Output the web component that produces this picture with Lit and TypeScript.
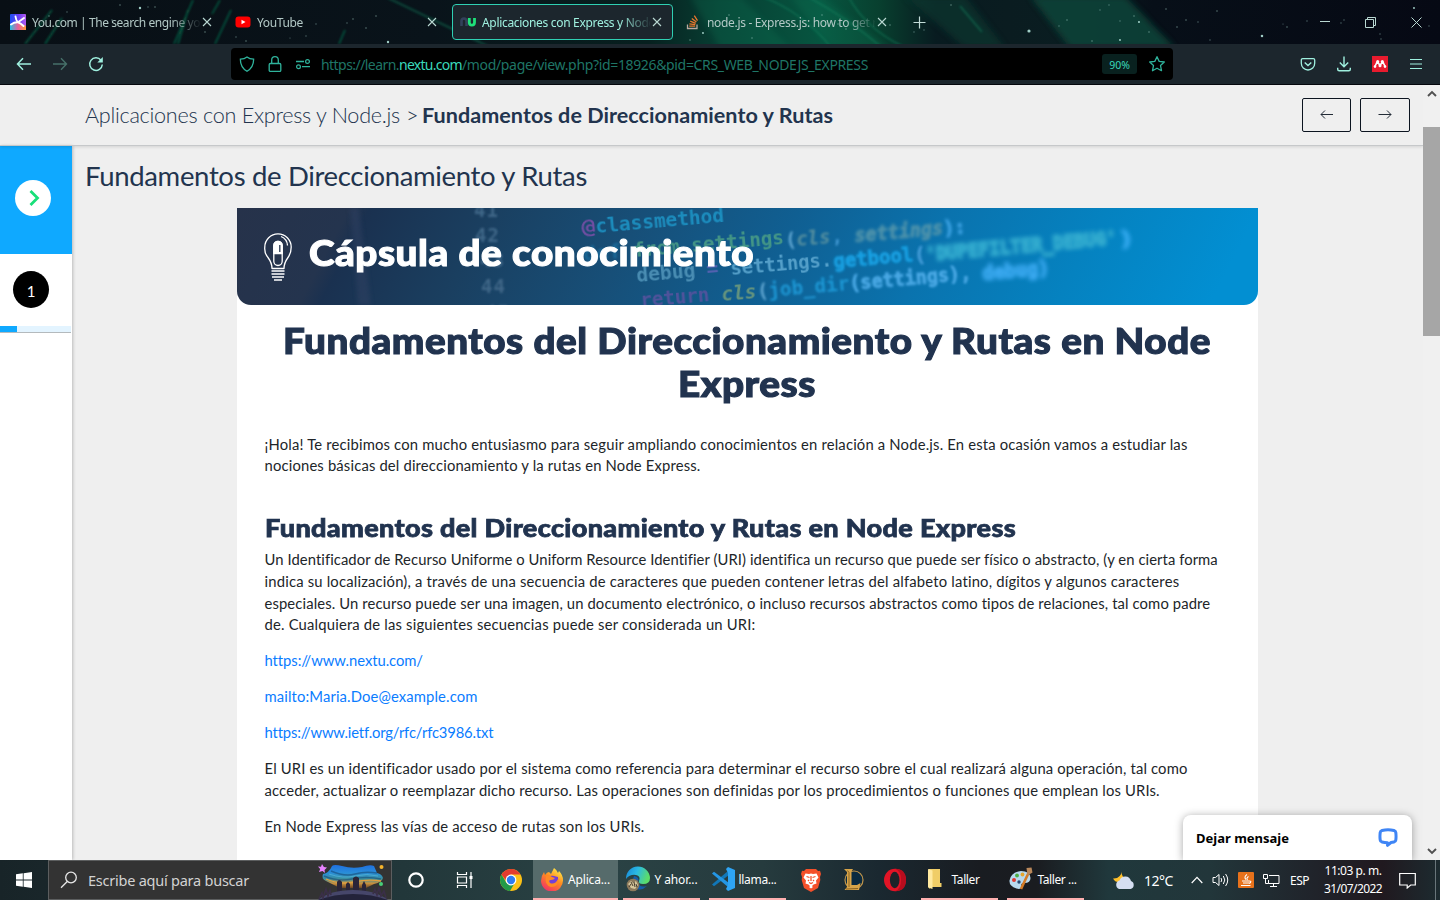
import { LitElement, html, svg, css } from "lit";
import { customElement, property } from "lit/decorators.js";
import { classMap } from "lit/directives/class-map.js";

/** One line of text that fills the given width, by tracking or (with stretch) by widening its glyphs. */
@customElement("fit-text")
class FitText extends LitElement {
  @property({ type: Number }) w = 0;
  @property({ type: Boolean }) stretch = false;
  static styles = css`
    :host { display: inline-block; white-space: pre; flex: none; text-align: left; }
    .t { display: inline-block; transform-origin: 0 50%; }
  `;
  render() {
    return html`<span class="t"><slot></slot></span>`;
  }
  firstUpdated() {
    const el = this.renderRoot.querySelector(".t") as HTMLElement;
    const n = (this.textContent || "").length;
    if (!this.w || !n) return;
    const natural = el.getBoundingClientRect().width;
    if (this.stretch) {
      el.style.transform = `scaleX(${this.w / natural})`;
      this.style.width = `${this.w}px`;
    } else {
      el.style.letterSpacing = `${(this.w - natural) / n}px`;
    }
  }
}

const ft = (text: string, w: number) => html`<fit-text .w=${w}>${text}</fit-text>`;
const wide = (text: string, w: number) => html`<fit-text .w=${w} .stretch=${true}>${text}</fit-text>`;

const icon = (w: number, h: number, body: unknown) =>
  html`<svg class="ic" width=${w} height=${h} viewBox="0 0 ${w} ${h}" fill="none">${body}</svg>`;

const closeX = icon(10, 10, svg`<path d="M1 1l8 8M9 1l-8 8" stroke="#b9d8d2" stroke-width="1.1"/>`);

const youIcon = html`<svg class="ic" width="16" height="16" viewBox="0 0 16 16">
  <defs><linearGradient id="yg" x1="0" y1="0" x2="1" y2="0"><stop offset="0" stop-color="#1d4ff0"/><stop offset=".55" stop-color="#6a3df5"/><stop offset="1" stop-color="#b65cf0"/></linearGradient>
  <linearGradient id="yh" x1="0" y1="0" x2="1" y2="0"><stop offset="0" stop-color="#24c3e8"/><stop offset=".5" stop-color="#e85f9c"/><stop offset="1" stop-color="#ff9a3c"/></linearGradient></defs>
  <rect width="16" height="16" rx="1" fill="url(#yg)"/><path d="M0 11L8 8l8 4v4H0z" fill="url(#yh)"/>
  <path d="M5.500 2.500Q6 6.500 8 8.300M8 8.300Q4.500 8 1 10.500M8 8.300Q10.500 9 13.500 12M8 8.300L14 4" stroke="#fff" stroke-width="1.900" fill="none" stroke-linecap="round"/></svg>`;
const ytIcon = icon(16, 16, svg`<rect x=".5" y="2.500" width="15" height="11" rx="3" fill="#f00"/><path d="M6.500 5.700v4.600l4-2.300z" fill="#fff"/>`);
const nuIcon = icon(16, 16, svg`<path d="M1.500 12V7a2.500 2.500 0 015 0v5" stroke="#33415a" stroke-width="2.600"/><path d="M9.300 4v4.500a2.600 2.600 0 005.200 0V4" stroke="#1fe07a" stroke-width="2.800"/>`);
const soIcon = icon(16, 16, svg`<path d="M2.500 10.500v4h9.500v-4" stroke="#b9a9a0" stroke-width="1.300"/><path d="M4.200 12.200h6M4.400 9.800l5.900.9M5.200 7.200l5.500 2.200M6.800 4.400l4.600 3.600M9.300 1.700l3.200 5" stroke="#e8772e" stroke-width="1.300"/>`);

const stars: [number, number, number][] = [
  [120, 5, 1], [140, 8, 1.5], [148, 7, .8], [155, 7, 1], [49, 16, 1], [67, 12, .8], [112, 20, .8], [205, 32, 1], [246, 41, 1],
  [316, 24, .8], [347, 23, .8], [353, 19, 1], [366, 28, 1], [376, 16, 1], [388, 42, 1.5], [290, 38, .7], [306, 36, .8], [236, 37, .8],
  [729, 15, 1], [703, 33, 1.200], [690, 40, 1], [752, 38, 1], [822, 15, 1], [838, 24, 1], [846, 29, 1], [890, 25, 1], [914, 32, .8], [924, 30, .8],
  [951, 5, 1], [1029, 31, 2], [1067, 20, 1], [1059, 26, .8], [1100, 10, .8], [1109, 5, .8], [1092, 41, 1], [1120, 21, .8], [1134, 16, 1],
  [1139, 22, 1.300], [1149, 32, 1], [1120, 40, 1.200], [1166, 9, 1], [1186, 20, 1], [1177, 27, 1], [1198, 22, .8], [1210, 40, .8],
  [1217, 11, 1], [1262, 36, 1.600], [1287, 27, 1], [1283, 24, .7], [1307, 21, .8], [1341, 23, .8], [1380, 34, .8], [1414, 8, 1.200], [1429, 26, .8], [1344, 20, .8], [1381, 39, .8],
];

const tabArt = html`<svg class="art" width="1440" height="44" viewBox="0 0 1440 44" preserveAspectRatio="none">
  <defs>
    <linearGradient id="sky" x1="0" x2="1" y1="0" y2="0">
      <stop offset="0" stop-color="#080f15"/><stop offset=".3" stop-color="#09131a"/><stop offset=".45" stop-color="#07201f"/>
      <stop offset=".5" stop-color="#073f33"/><stop offset=".57" stop-color="#075540"/><stop offset=".61" stop-color="#08402f"/>
      <stop offset=".65" stop-color="#081b20"/><stop offset=".7" stop-color="#0a1c20"/><stop offset=".75" stop-color="#0a1d21"/><stop offset=".8" stop-color="#070f18"/><stop offset="1" stop-color="#060914"/>
    </linearGradient>
    <filter id="soft"><feGaussianBlur stdDeviation="3"/></filter><filter id="soft1"><feGaussianBlur stdDeviation="1"/></filter>
  </defs>
  <rect width="1440" height="44" fill="url(#sky)"/>
  <path d="M1030 -4h95l50 52h-105z" fill="#0f4337" filter="url(#soft)" opacity=".9"/>
  <path d="M690 -4h50l50 52h-70zM790 -4h30l70 52h-60z" fill="#0a7a59" filter="url(#soft)" opacity=".25"/>
  <path d="M905 -4h60l40 52h-40z" fill="#0a3a30" filter="url(#soft)" opacity=".6"/>
  <path d="M193 0L174 44M188 10L178 44M220 0l-8 14M231 10l-16 34M52 10L25 44M62 18L45 44M345 30l-6 14" stroke="#0a5d44" stroke-width="1.500" filter="url(#soft1)"/>
  <path d="M388 -2L500 52M440 23L480 42M960 6l22 26M848 -4Q865 28 902 46M760 -4Q800 10 830 46M810 -2Q850 20 880 46" stroke="#11805d" stroke-width="2" fill="none" filter="url(#soft1)" opacity=".45"/>
  ${stars.map(([x, y, r]) => svg`<circle cx=${x} cy=${y} r=${r * .8} fill="#a9d8d0" opacity=${r > 1 ? .95 : .5}/>`)}
</svg>`;

const T = "#9ff0df";
const G = "#2fb39c";
const toolbarIcons = {
  back: icon(16, 16, svg`<path d="M15 8H1.500M7 2.300L1.500 8 7 13.700" stroke=${T} stroke-width="1.500"/>`),
  fwd: icon(16, 16, svg`<path d="M1 8h13.500M9 2.300L14.500 8 9 13.700" stroke="#467069" stroke-width="1.400"/>`),
  reload: icon(16, 16, svg`<path d="M14.300 8.500A6.300 6.300 0 1113 4.200" stroke=${T} stroke-width="1.500"/><path d="M14.800 1v5.500H9.300z" fill=${T}/>`),
  shield: icon(16, 16, svg`<path d="M8 1Q10.500 3 14.600 3.200Q14.800 11 8 15.300Q1.200 11 1.400 3.200Q5.500 3 8 1z" stroke=${G} stroke-width="1.300"/>`),
  lock: icon(16, 16, svg`<rect x="2.200" y="7.500" width="11.600" height="8" rx="1.200" stroke=${G} stroke-width="1.300"/><path d="M4.700 7.500V4a3.300 3.300 0 016.600 0v3.500" stroke=${G} stroke-width="1.300"/>`),
  perm: icon(16, 16, svg`<circle cx="12.500" cy="5.500" r="1.900" stroke=${G} stroke-width="1.200"/><circle cx="3.500" cy="10.700" r="1.900" stroke=${G} stroke-width="1.200"/><path d="M1 5.500h8M7 10.700h8" stroke=${G} stroke-width="1.300"/>`),
  star: icon(18, 18, svg`<path d="M9 1.700l2.200 4.700 5.100.6-3.800 3.500 1 5.200L9 13.200l-4.500 2.500 1-5.200L1.700 7l5.100-.6z" stroke=${G} stroke-width="1.300" stroke-linejoin="round"/>`),
  pocket: icon(16, 16, svg`<path d="M2.700 2.600h10.600q1.400 0 1.400 1.400v3.300a6.700 6.700 0 01-13.400 0V4q0-1.400 1.400-1.400z" stroke=${T} stroke-width="1.300"/><path d="M4.700 6.500L8 9.600l3.300-3.100" stroke=${T} stroke-width="1.400"/>`),
  download: icon(16, 16, svg`<path d="M8 .5v10M3.800 6.500L8 10.700l4.200-4.200M1.700 11.700v1.500q0 1.500 1.500 1.500h9.600q1.500 0 1.500-1.500v-1.500" stroke=${T} stroke-width="1.400"/>`),
  mend: icon(16, 16, svg`<rect width="16" height="16" fill="#e81b2e"/><path d="M3 10.200Q4 8.500 5 6M8 9.500L5.700 6M8 9.500L10.300 6M13 10.200Q12 8.500 11 6" stroke="#fff" stroke-width="1.600"/><circle cx="3" cy="10.600" r="1.300" fill="#fff"/><circle cx="13" cy="10.600" r="1.300" fill="#fff"/><circle cx="8" cy="9.800" r="1.500" fill="#fff"/><circle cx="5.700" cy="5.400" r="1.500" fill="#fff"/><circle cx="10.300" cy="5.400" r="1.500" fill="#fff"/>`),
  menu: icon(14, 12, svg`<path d="M1 1.500h12M1 6h12M1 10.500h12" stroke=${T} stroke-width="1.200"/>`),
};

@customElement("browser-chrome")
class BrowserChrome extends LitElement {
  static styles = css`
    :host { display: block; height: 85px; background: #05070d; font-family: "Noto Sans", sans-serif; }
    .ic { display: block; flex: none; }
    .strip { position: relative; height: 44px; overflow: hidden; }
    .art { position: absolute; inset: 0; display: block; }
    .tabs { position: relative; display: flex; gap: 5px; padding: 4px 0 0 2px; align-items: flex-start; }
    .tab { box-sizing: border-box; width: 220px; height: 36px; border: 1px solid transparent; border-radius: 4px; display: flex; align-items: center; padding-left: 7px; color: #b3c9c6; font-size: 12px; }
    .active { width: 221px; margin-right: -1px; background: #1c262d; border-color: #2fd0b3; color: #9ff0df; }
    .title { width: 168px; margin: 0 2px 0 6px; padding-top: 2px; overflow: hidden; line-height: 18px; -webkit-mask-image: linear-gradient(to right, #000 138px, transparent 170px); }
    .plus { display: flex; height: 36px; align-items: center; padding-left: 11px; }
    .win { display: flex; margin-left: auto; gap: 35px; height: 36px; align-items: center; padding-right: 18px; }
    .bar { height: 40px; background: #1c262d; display: flex; align-items: center; padding: 0 17px 0 16px; box-sizing: border-box; }
    .nav { display: flex; gap: 20px; width: 215px; }
    .url { width: 942px; height: 32px; box-sizing: border-box; background: #000; border-radius: 4px; display: flex; align-items: center; padding: 0 7px 0 8px; color: #1f7566; font-size: 14px; }
    .url .ic { margin-right: 12px; }
    .addr { display: flex; margin-left: -2px; line-height: 20px; padding-top: 1px; }
    .host { color: #3ad8bb; }
    .zoom { margin-left: auto; width: 35px; height: 20px; background: #09211f; border-radius: 3px; color: #3ad8bb; font-size: 10.500px; line-height: 22px; text-align: center; margin-right: 11px; }
    .url .star .ic { margin: 0; }
    .right { display: flex; gap: 20px; margin-left: auto; align-items: center; }
    .right span { margin-left: 1px; }
  `;
  tabs = [
    { i: youIcon, t: "You.com | The search engine yo", w: 168 },
    { i: ytIcon, t: "YouTube", w: 46 },
    { i: nuIcon, t: "Aplicaciones con Express y Node", w: 173, a: true },
    { i: soIcon, t: "node.js - Express.js: how to get r", w: 170 },
  ];
  render() {
    const b = toolbarIcons;
    return html`
      <div class="strip">${tabArt}
        <div class="tabs">
          ${this.tabs.map((t) => html`<div class=${classMap({ tab: true, active: !!t.a })}>${t.i}<div class="title">${ft(t.t, t.w)}</div>${closeX}</div>`)}
          <div class="plus">${icon(13, 13, svg`<path d="M6.500 .5v12M.5 6.500h12" stroke="#c2dcd8" stroke-width="1.200"/>`)}</div>
          <div class="win">
            ${icon(10, 10, svg`<path d="M0 4.500h10" stroke="#b9d8d2"/>`)}
            ${icon(11, 11, svg`<path d="M2.500 2.500v-2h8v8h-2M.5 2.500h8v8h-8z" stroke="#b9d8d2"/>`)}
            ${icon(11, 11, svg`<path d="M.5 .5l10 10M10.500 .5l-10 10" stroke="#b9d8d2"/>`)}
          </div>
        </div>
      </div>
      <div class="bar">
        <div class="nav">${b.back}${b.fwd}${b.reload}</div>
        <div class="url">${b.shield}${b.lock}${b.perm}
          <div class="addr">${ft("https://learn.", 78)}<span class="host">${ft("nextu.com", 63)}</span>${ft("/mod/page/view.php?id=18926&pid=CRS_WEB_NODEJS_EXPRESS", 406)}</div>
          <div class="zoom">90%</div><span class="star">${b.star}</span>
        </div>
        <div class="right">${b.pocket}${b.download}${b.mend}<span>${b.menu}</span></div>
      </div>`;
  }
}

interface Seg { t: string; x: number; y: number; w: number; c: string; b: number; i?: boolean; o?: number; }
const code: Seg[] = [
  { t: "@", x: 582, y: 234, w: 14, c: "#7a4fa8", b: .6 },
  { t: "classmethod", x: 596, y: 233, w: 129, c: "#1f93c4", b: .5 },
  { t: "def", x: 584, y: 261, w: 38, c: "#1f7fb4", b: .9, o: .6 },
  { t: "from_settings", x: 634, y: 257, w: 151, c: "#4a9c86", b: .6 },
  { t: "(", x: 786, y: 247, w: 11, c: "#6fb3dd", b: .8 },
  { t: "cls", x: 797, y: 246, w: 34, c: "#5e95a0", b: .8, i: true },
  { t: ",", x: 832, y: 243, w: 11, c: "#4aa0dc", b: .9 },
  { t: "settings", x: 855, y: 242, w: 89, c: "#4f93ab", b: 1.4, i: true, o: 1 },
  { t: "):", x: 944, y: 235, w: 22, c: "#3fa5e6", b: 1.4, o: 1 },
  { t: "debug", x: 637, y: 282, w: 59, c: "#4f93b8", b: .5 },
  { t: "=", x: 707, y: 276, w: 12, c: "#5a62b4", b: .6 },
  { t: "settings.", x: 731, y: 275, w: 102, c: "#5ba6cf", b: .7 },
  { t: "getbool", x: 834, y: 268, w: 80, c: "#16a0e2", b: 1.2, o: 1 },
  { t: "(", x: 915, y: 262, w: 11, c: "#4aa0dc", b: 1.2 },
  { t: "'DUPEFILTER_DEBUG'", x: 926, y: 261, w: 192, c: "#34add0", b: 1.9, o: 1 },
  { t: ")", x: 1120, y: 246, w: 14, c: "#34aaf0", b: 1.9, o: 1 },
  { t: "return", x: 641, y: 307, w: 69, c: "#57529e", b: .6 },
  { t: "cls", x: 722, y: 301, w: 35, c: "#6e9a7c", b: .6, i: true },
  { t: "(", x: 758, y: 298, w: 11, c: "#6fb3dd", b: .8 },
  { t: "job_dir", x: 769, y: 297, w: 81, c: "#1f97d4", b: .9, o: 1 },
  { t: "(settings),", x: 850, y: 290, w: 122, c: "#4aa8e4", b: 1.2, o: 1 },
  { t: "debug)", x: 983, y: 280, w: 67, c: "#3aa9f0", b: 1.9, o: 1 },
];
const nums = [["41", 474, 217], ["42", 475, 242], ["43", 480, 267], ["44", 481, 293], ["45", 485, 319]] as const;

const bannerArt = html`<svg class="art" width="1021" height="97" viewBox="237 208 1021 97">
  <defs><linearGradient id="bg" x1="0" x2="1" y1="0" y2="0.050">
    <stop offset="0" stop-color="#26324a"/><stop offset=".11" stop-color="#24344e"/><stop offset=".13" stop-color="#1a3150"/>
    <stop offset=".25" stop-color="#1a3f60"/><stop offset=".4" stop-color="#174f78"/><stop offset=".55" stop-color="#105f92"/>
    <stop offset=".7" stop-color="#0a73ae"/><stop offset=".85" stop-color="#0582c0"/><stop offset="1" stop-color="#028fd2"/></linearGradient>
    ${[5, 6, 7, 8, 9, 12, 14, 19, 20].map((n) => svg`<filter id=${"b" + n} x="-20%" y="-30%" width="140%" height="160%"><feGaussianBlur stdDeviation=${n / 10}/></filter>`)}
  </defs>
  <rect x="237" y="208" width="1021" height="97" fill="url(#bg)"/>
  <path d="M350 208h9l12 97h-13z" fill="#304363" opacity=".5" filter="url(#b20)"/>
  ${nums.map(([t, x, y]) => svg`<text class="code" x=${x} y=${y} textLength="24" fill="#3f6687" filter="url(#b12)">${t}</text>`)}
  ${code.map((s) => svg`<text class=${(s.i ? "code it" : "code") + (s.b > 1.5 ? " farther" : s.b > 1 ? " far" : "")} transform="translate(${s.x} ${s.y}) rotate(-5)" textLength=${s.w} lengthAdjust="spacingAndGlyphs" fill=${s.c} stroke=${s.c} opacity=${s.o ?? .9} filter="url(#b${Math.round(s.b * 10)})">${s.t}</text>`)}
</svg>`;

const bulb = icon(30, 50, svg`<g stroke="#fff" stroke-width="1.300" stroke-linejoin="round"><path d="M9 36.500Q9 31 5 25.500A14 14 0 0 1 1.800 15a13.200 13.200 0 0 1 26.400 0q0 6-3.200 10.500Q21 31 21 36.500z"/><path d="M18 4.500q6 2.200 6.500 9" stroke-width="1.300"/><rect x="10.800" y="9.500" width="8.400" height="24" rx="4.200"/><path d="M10.800 21.500h8.400V13.500a4.200 4.200 0 00-8.400 0z" fill="#fff"/><path d="M16.800 13v7" stroke="#24344e"/><path d="M8.500 39h13M8.500 42h13M9 45h12M11 48h8" stroke-width="1.500"/></g>`);

type Line = [string, number];
const intro: Line[] = [
  ["¡Hola! Te recibimos con mucho entusiasmo para seguir ampliando conocimientos en relación a Node.js. En esta ocasión vamos a estudiar las", 923],
  ["nociones básicas del direccionamiento y la rutas en Node Express.", 436],
];
const uri: Line[] = [
  ["Un Identificador de Recurso Uniforme o Uniform Resource Identifier (URI) identifica un recurso que puede ser físico o abstracto, (y en cierta forma", 953],
  ["indica su localización), a través de una secuencia de caracteres que pueden contener letras del alfabeto latino, dígitos y algunos caracteres", 915],
  ["especiales. Un recurso puede ser una imagen, un documento electrónico, o incluso recursos abstractos como tipos de relaciones, tal como padre", 946],
  ["de. Cualquiera de las siguientes secuencias puede ser considerada un URI:", 491],
];
const links: Line[] = [["https://www.nextu.com/", 158], ["mailto:Maria.Doe@example.com", 213], ["https://www.ietf.org/rfc/rfc3986.txt", 228]];
const usage: Line[] = [
  ["El URI es un identificador usado por el sistema como referencia para determinar el recurso sobre el cual realizará alguna operación, tal como", 923],
  ["acceder, actualizar o reemplazar dicho recurso. Las operaciones son definidas por los procedimientos o funciones que emplean los URIs.", 895],
];
const closing: Line[] = [["En Node Express las vías de acceso de rutas son los URIs.", 380]];

@customElement("course-page")
class CoursePage extends LitElement {
  static styles = css`
    :host { display: grid; grid-template-columns: 1423px 17px; height: 775px; overflow: hidden; position: relative; background: #efefef; font-family: Lato, sans-serif; }
    .ic { display: block; flex: none; }
    .view { display: grid; grid-template-rows: 61px 1fr; overflow: hidden; }
    .head { box-sizing: border-box; display: flex; align-items: center; padding: 0 13px 0 85px; color: #22344e; font-size: 21.600px; border-bottom: 1px solid #c6c8ca; box-shadow: 0 1px 3px rgba(0,0,0,.12); z-index: 1; }
    .crumb { font-weight: 300; display: flex; gap: 6px; }
    .crumb b { font-weight: 700; }
    .btns { margin-left: auto; display: flex; gap: 9px; }
    .btn { box-sizing: border-box; width: 49px; height: 34px; border: 1px solid #0c1420; border-radius: 2px; display: grid; place-items: center; }
    .btn + .btn { width: 50px; }
    .body { display: grid; grid-template-columns: 72px 1fr; min-height: 0; }
    .side { background: #fff; box-shadow: 1px 0 3px rgba(0,0,0,.22); }
    .toggle { height: 108px; background: #0fa9ff; display: flex; align-items: center; padding-left: 15px; box-sizing: border-box; padding-bottom: 4px; }
    .circle { width: 36px; height: 36px; border-radius: 50%; background: #fff; display: grid; place-items: center; padding-left: 2px; box-sizing: border-box; }
    .step { height: 72px; display: flex; align-items: center; padding: 0 0 1px 13px; box-sizing: border-box; }
    .num { background: #000; color: #fff; font-size: 15px; line-height: 41px; height: 37px; display: block; text-align: center; padding: 0; }
    .prog { width: 71px; height: 6px; background: #e3f4ff; border-bottom: 1px solid #b4babd; }
    .fill { width: 17px; height: 6px; background: #0fa9ff; }
    .main { padding-left: 13px; overflow: hidden; }
    .title { margin: 0; font-weight: 400; font-size: 27.500px; line-height: 34px; height: 62px; padding-top: 13px; box-sizing: border-box; color: #22344e; }
    .card { margin-left: 152px; width: 1021px; height: 700px; background: #fff; }
    .banner { position: relative; height: 97px; border-radius: 0 0 14px 14px; overflow: hidden; display: flex; padding: 24px 0 0 26px; box-sizing: border-box; }
    .art { position: absolute; left: 0; top: 0; }
    .code { font-family: "DejaVu Sans Mono", monospace; font-size: 19px; font-weight: 700; stroke-width: 0; }
    .far { stroke-width: .8px; }
    .farther { stroke-width: 1.800px; }
    .it { font-style: italic; }
    .bannertitle { position: relative; color: #fff; font-weight: 900; font-size: 36px; line-height: 43px; letter-spacing: .5px; margin-left: 16px; margin-top: -1px; -webkit-text-stroke: 1.100px #fff; }
    .bulb { position: relative; }
    .content { padding: 13.300px 28px 0 27.500px; color: #212529; font-size: 14.800px; line-height: 21.600px; }
    .ln { display: block; height: 21.600px; }
    h1 { margin: 0 0 29px; color: #21334f; font-weight: 900; font-size: 36px; line-height: 43.200px; text-align: center; letter-spacing: .5px; -webkit-text-stroke: 1.100px #21334f; position: relative; top: .7px; }
    h1 span { display: block; height: 43.200px; }
    h2 { margin: 35.500px 0 8px; color: #21334f; font-weight: 900; font-size: 24.500px; line-height: 29px; letter-spacing: .3px; -webkit-text-stroke: .750px #21334f; position: relative; top: .6px; }
    p { margin: 0 0 14.400px; }
    .link { color: #0a7cff; }
    .scroll { display: flex; flex-direction: column; background: #f0f0f0; align-items: center; }
    .arrow { height: 17px; display: grid; place-items: center; }
    .thumb { width: 17px; height: 209px; margin-top: 25px; background: #a6a6a6; }
    .down { margin-top: auto; }
    .chat { position: absolute; left: 1183px; bottom: 0; width: 229px; height: 45px; box-sizing: border-box; background: #fff; border-radius: 8px 8px 0 0; box-shadow: 0 1px 8px rgba(0,0,0,.35); display: flex; justify-content: space-between; align-items: center; padding: 1px 14px 0 13px; font: 700 13px "Noto Sans", sans-serif; color: #000; z-index: 2; }
  `;
  para(lines: Line[], cls = "") {
    return html`<p class=${cls}>${lines.map(([t, w]) => html`<span class="ln">${ft(t, w)}</span>`)}</p>`;
  }
  render() {
    return html`
      <div class="view">
        <div class="head">
          <div class="crumb">${ft("Aplicaciones con Express y Node.js", 315)}<span>${ft(">", 10)}</span><b>${ft("Fundamentos de Direccionamiento y Rutas", 411)}</b></div>
          <div class="btns">
            <div class="btn">${icon(14, 10, svg`<path d="M13 4.500H1M5 .5l-4 4 4 4" stroke="#222b36"/>`)}</div>
            <div class="btn">${icon(14, 10, svg`<path d="M.5 4.500H13M9 .5l4 4-4 4" stroke="#222b36"/>`)}</div>
          </div>
        </div>
        <div class="body">
          <div class="side">
            <div class="toggle"><div class="circle">${icon(12, 18, svg`<path d="M2.500 2l7 7-7 7" stroke="#19df78" stroke-width="2.800"/>`)}</div></div>
            <div class="step"><div class="circle num">1</div></div>
            <div class="prog"><div class="fill"></div></div>
          </div>
          <div class="main">
            <div class="title">${ft("Fundamentos de Direccionamiento y Rutas", 502)}</div>
            <div class="card">
              <div class="banner">${bannerArt}<div class="bulb">${bulb}</div><div class="bannertitle">${wide("Cápsula de conocimiento", 445)}</div></div>
              <div class="content">
                <h1><span>${wide("Fundamentos del Direccionamiento y Rutas en Node", 928)}</span><span>${wide("Express", 138)}</span></h1>
                ${this.para(intro)}
                <h2>${wide("Fundamentos del Direccionamiento y Rutas en Node Express", 751)}</h2>
                ${this.para(uri)}
                ${links.map((l) => this.para([l], "link"))}
                ${this.para(usage)}
                ${this.para(closing)}
              </div>
            </div>
          </div>
        </div>
      </div>
      <div class="scroll">
        <div class="arrow">${icon(10, 7, svg`<path d="M1 6l4-4 4 4" stroke="#505050" stroke-width="1.900"/>`)}</div>
        <div class="thumb"></div>
        <div class="arrow down">${icon(10, 7, svg`<path d="M1 1l4 4 4-4" stroke="#505050" stroke-width="1.900"/>`)}</div>
      </div>
      <div class="chat">${ft("Dejar mensaje", 93)}${icon(20, 20, svg`<path d="M4 2.500Q10 1.200 16 2.500q1.600.4 1.800 2 .5 4 0 7.500-.2 1.700-1.800 2-1.700.4-3 .5L9.500 17.300v-2.600Q6.500 14.600 4 14q-1.600-.3-1.800-2-.5-3.500 0-7.500.2-1.600 1.800-2z" stroke="#3f85f5" stroke-width="3" stroke-linejoin="round"/>`)}</div>`;
  }
}

const W = "#fff";
const tb = {
  start: icon(16, 16, svg`<path d="M0 2.300l6.800-1v6.300H0zM7.600 1.200L16 0v7.600H7.600zM0 8.400h6.800v6.300l-6.800-1zM7.600 8.400H16V16l-8.400-1.200z" fill=${W}/>`),
  search: icon(18, 18, svg`<circle cx="11" cy="6.500" r="5.300" stroke="#e8e8e8" stroke-width="1.300"/><path d="M7.200 10.500L1 16.700" stroke="#e8e8e8" stroke-width="1.300"/>`),
  cortana: icon(18, 18, svg`<circle cx="9" cy="9" r="6.700" stroke=${W} stroke-width="2.200"/>`),
  view: icon(17, 16, svg`<path d="M1.500 0v2.500h9V0M1.500 16v-2.500h9V16M1.500 5h9v6h-9zM15 0v16" stroke=${W} stroke-width="1.200"/><rect x="13.500" y="4" width="3" height="3" fill=${W}/>`),
  chrome: icon(22, 22, svg`<circle cx="11" cy="11" r="11" fill="#fbc116"/><path d="M1.500 5.500A11 11 0 0010 22l5-8.500-8.500.5z" fill="#229a49"/><path d="M1.500 5.500A11 11 0 0120.500 5.500H11L7 13z" fill="#e33b2e"/><circle cx="11" cy="11" r="5.400" fill="#fff"/><circle cx="11" cy="11" r="4.200" fill="#2f7cf0"/>`),
  firefox: html`<svg class="ic" width="24" height="24" viewBox="0 0 24 24"><defs><linearGradient id="ff" x1=".8" y1="0" x2=".2" y2="1"><stop offset="0" stop-color="#fff04a"/><stop offset=".45" stop-color="#ff8a1f"/><stop offset="1" stop-color="#f02b6c"/></linearGradient></defs><path d="M14 1q3 2 4 5l1-2q4 4 4 9a11 11 0 01-22 1Q1 9 4 5l1 3q2-3 4-3l2 2z" fill="url(#ff)"/><path d="M7 12q2-4 7-3l4 1q1 7-5 8-6 0-6-6z" fill="#7140d8"/><path d="M6 9q3-2 6 1l3 1q-1 2-4 2t-1 3q5 2 8-4 1 8-7 8-7-2-5-11z" fill="#ff8a24"/></svg>`,
  edge: html`<svg class="ic" width="26" height="26" viewBox="0 0 26 26"><defs><linearGradient id="eg" x1="0" y1="0" x2="1" y2=".3"><stop offset="0" stop-color="#1686d8"/><stop offset=".5" stop-color="#2ab9e4"/><stop offset="1" stop-color="#5bdc6a"/></linearGradient></defs><path d="M1 13A12 12 0 0125 12q0 6-7 6-5 0-4-3 2-5-3-6-6-1-10 4z" fill="url(#eg)"/><path d="M9 10q-4 9 3 13 5 2 10-3-8 2-9-4 2-5-4-6z" fill="#155ca8"/><circle cx="8" cy="19" r="6.300" fill="#8c7a5c"/><path d="M3 18l3-3 2 2 3-2 2 4-3 4-4-1z" fill="#d5c59b"/><path d="M4 21l2-3M9 16l1 5M6 16l2 4M11 18l1 3" stroke="#473d2e"/></svg>`,
  vscode: icon(24, 24, svg`<path d="M17 4L1 17.500l2 1.700L18 8z" fill="#1177b8"/><path d="M17 20L1 6.500l2-1.700L18 16z" fill="#2496e4"/><path d="M17 0l7 3v18l-7 3-2-2 2-4V6l-2-4z" fill="#2ea5f5"/>`),
  brave: icon(22, 24, svg`<path d="M6 1h10l2 2 2-.3L21 6l-1 3 .3 3L18 20l-7 4-7-4L1.700 12 2 9 1 6l1-3.300L4 3z" fill="#f4502a"/><path d="M5.500 5.500L9 6l2-.5 2 .5 3.500-.5 2 4-2.500 3 .5 3-3 1-2.500 2.500L8.500 16.500l-3-1 .5-3-2.500-3z" fill="#fff"/><path d="M6.500 8.500l3 1M15.500 8.500l-3 1M11 8v5M9 14.500l2 1 2-1M8 12l1 1M14 12l-1 1" stroke="#f4502a" stroke-width="1.300"/><path d="M9 19l2 1.500L13 19l-2-1.500z" fill="#fff"/>`),
  lol: icon(22, 24, svg`<circle cx="12" cy="12" r="9" fill="#0a2a40" stroke="#c0954a" stroke-width="1.200"/><path d="M2 1h9l-1.500 2.500V17H15l3.500-2-1.500 7H2.500L5 19V4z" fill="#d7a449"/><path d="M5.500 2.500L7 4.500V19M4 21l12-.5" stroke="#8a6220"/>`),
  opera: icon(24, 24, svg`<ellipse cx="12" cy="12" rx="11" ry="11.300" fill="#e21426"/><path d="M12 .7q11 0 11 11.300T12 23.300q6-2 6-11.300T12 .7z" fill="#b80d1e"/><ellipse cx="11.700" cy="12" rx="4.800" ry="8.200" fill="#1d2329"/>`),
  folder: icon(16, 22, svg`<path d="M2 1h11v14h1.500v4H4L2 21z" fill="#f0cd67"/><path d="M1 1l4.500 1.500V21L1 19.500z" fill="#ffe9a0"/>`),
  paint: icon(26, 24, svg`<path d="M13 4Q22 4 22.500 11q0 5-6 5-4 0-3 3 0 4-5 2.500Q1 19 1.500 13.500 3 5 13 4z" fill="#b8d9ee"/><circle cx="6" cy="13" r="2" fill="#e03a31"/><circle cx="9" cy="8.500" r="1.900" fill="#4dae43"/><circle cx="14.500" cy="7.500" r="1.900" fill="#e6a52d"/><circle cx="11" cy="15" r="1.700" fill="#264a73"/><path d="M20.500 6L13 22" stroke="#d57b25" stroke-width="2.600"/><path d="M18.500 1l5-.5 1 5-5 3z" fill="#b9875a"/>`),
  weather: icon(24, 20, svg`<path d="M10 0Q8.500 4 12 8l-2 3Q4 14 1 8.500 9 9 10 0z" fill="#ffc02b"/><path d="M7 19a4.500 4.500 0 01.5-8.500 6 6 0 0111.500.5 4.200 4.200 0 01-.5 8z" fill="#d5dff2"/>`),
  up: icon(12, 8, svg`<path d="M.7 7L6 1.300 11.300 7" stroke=${W} stroke-width="1.200"/>`),
  sound: icon(17, 14, svg`<path d="M1 4.500h2.500L7 1.500v11L3.500 9.500H1zM9 5q1.500 2 0 4M11.300 3q3 4 0 8M13.600 1q4.300 6 0 12" stroke=${W}/>`),
  java: icon(16, 16, svg`<rect width="16" height="16" rx="1" fill="#e7721b"/><path d="M9 2.500Q5.500 5 8 7.500M10.500 4.500Q8 6 9.500 8M4 9h7.500M5 11h6M3 13.500h9.500M11.500 9q2 0 1 1.500l-1.500 1" stroke="#fff" stroke-width="1.100"/>`),
  net: icon(17, 15, svg`<path d="M6 2.500h10v8H5.500V7M7 13.500h7M10.500 10.500v3" stroke=${W}/><path d="M.5 1.500h4v4h-4zM2.500 5.500v5h3" stroke=${W}/>`),
  note: icon(17, 17, svg`<path d="M.7 1.500h15.600v11.500h-4.600l-3.500 3v-3H.7z" stroke=${W} stroke-width="1.200"/>`),
};

const landscape = html`<svg class="land" width="70" height="37" viewBox="0 0 70 37"><defs>
  <linearGradient id="ls" x1="0" x2="0" y1="0" y2="1"><stop offset="0" stop-color="#1f6fe0"/><stop offset=".35" stop-color="#2a8fd8"/><stop offset=".6" stop-color="#3a8f9c"/><stop offset=".8" stop-color="#c8913e"/><stop offset="1" stop-color="#6b4424"/></linearGradient></defs>
  <path d="M14 3Q16 1 24 3q10 3 20 1 8-3 12-1l3 7q5 1 6 5-1 4-9 6l-8 4H22L8 18Q3 16 5 11q6-1 9-8z" fill="url(#ls)"/>
  <path d="M13 8q14 6 24 3t22-1M6 13q14 6 28 3t29 0" stroke="#154a7a" stroke-width="1.600" fill="none" opacity=".6"/>
  <path d="M11 11q14 5 26 2t23 0" stroke="#56b6dc" stroke-width="1" fill="none" opacity=".7"/>
  <path d="M8 16q14 6 28 3t27-1" stroke="#e0a040" stroke-width="1.300" fill="none"/>
  <path d="M19 30v-11q2-4 5 0v11zM28 29v-8l2-2 2 2v8zM35 29V15q3-3 6 0v14zM44 30v-8l2-4 2 4v8z" fill="#2b2538"/>
  <path d="M0 37Q12 27 35 27t35 10z" fill="#46466a"/><path d="M0 37Q16 31 35 31t35 6z" fill="#23233a"/>
  <path d="M1 36l3-6 1 5 3-9 2 7 2-6 1 5M55 31l2-5 2 6 2-8 2 9 3-5 2 7" stroke="#3a2f48" stroke-width="1.600" fill="none"/>
  <path d="M4 1l1.900 3L9 4.500 6.500 7 7 10 4.500 8 1 9l1.200-3L0 3.500 3 3.700z" fill="#e983ff"/><circle cx="63.500" cy="4" r="2" fill="#f6b32b"/><circle cx="63" cy="21" r="2" fill="#48cf78"/></svg>`;

@customElement("task-bar")
class TaskBar extends LitElement {
  static styles = css`
    :host { display: flex; height: 40px; background: linear-gradient(90deg, #182428 0, #22373a 28%, #2a4244 42%, #263b3e 53%, #1a2830 61%, #191c21 68%, #1a1c20 72%, #20383c 77%, #22363a 84%, #20242b 91%, #20191f 96%, #1d2b30 100%); color: #fff; font: 12px "Noto Sans", sans-serif; }
    .ic, .land { display: block; flex: none; }
    .cell { display: grid; place-items: center; height: 40px; flex: none; }
    .w48 { width: 48px; }
    .search { width: 344px; height: 40px; box-sizing: border-box; background: #333; border: 1px solid #5c5e5f; display: flex; align-items: center; padding-left: 11px; font-size: 14.500px; color: #d2d2d2; gap: 10px; }
    .land { margin: 2px 3px 0 auto; }
    .w45 { width: 45px; }
    .app { box-sizing: border-box; width: 77px; height: 40px; margin: 0 4.500px; border-bottom: 2px solid #ffb0b0; display: flex; align-items: center; gap: 4px; flex: none; padding-left: 2px; }
    .active { width: 85px; margin: 0; padding-left: 7px; background: #566b6b; }
    .w42 { width: 42px; }
    .folder { padding-left: 6px; gap: 9px; }
    .paint { padding-left: 1px; }
    .weather { display: flex; align-items: center; gap: 8px; margin-left: 24px; font-size: 14px; }
    .tray { display: flex; align-items: center; gap: 9px; margin-left: 18px; }
    .lang { margin-left: 1px; }
    .clock { width: 58px; margin-left: 6px; display: flex; flex-direction: column; align-items: center; line-height: 18px; }
    .note { margin-left: 8px; }
    .edge { width: 1px; background: #69757a; margin-left: auto; margin-right: 4px; }
  `;
  render() {
    return html`
      <div class="cell w48">${tb.start}</div>
      <div class="search">${tb.search}${ft("Escribe aquí para buscar", 161)}${landscape}</div>
      <div class="cell w48">${tb.cortana}</div>
      <div class="cell w48">${tb.view}</div>
      <div class="cell w45">${tb.chrome}</div>
      <div class="app active">${tb.firefox}${ft("Aplica...", 42)}</div>
      <div class="app">${tb.edge}${ft("Y ahor...", 43)}</div>
      <div class="app">${tb.vscode}${ft("llama...", 38)}</div>
      <div class="cell w42">${tb.brave}</div>
      <div class="cell w42">${tb.lol}</div>
      <div class="cell w42">${tb.opera}</div>
      <div class="app folder">${tb.folder}${ft("Taller", 28)}</div>
      <div class="app paint">${tb.paint}${ft("Taller ...", 39)}</div>
      <div class="weather">${tb.weather}${ft("12°C", 29)}</div>
      <div class="tray">${tb.up}${tb.sound}${tb.java}${tb.net}<span class="lang">${ft("ESP", 19)}</span>
        <div class="clock">${ft("11:03 p. m.", 57)}${ft("31/07/2022", 58)}</div>
        <span class="note">${tb.note}</span></div>
      <div class="edge"></div>`;
  }
}

@customElement("app-root")
class AppRoot extends LitElement {
  static styles = css`
    :host { display: grid; grid-template-rows: 85px 775px 40px; width: 1440px; height: 900px; overflow: hidden; }
  `;
  render() {
    return html`<browser-chrome></browser-chrome><course-page></course-page><task-bar></task-bar>`;
  }
}
